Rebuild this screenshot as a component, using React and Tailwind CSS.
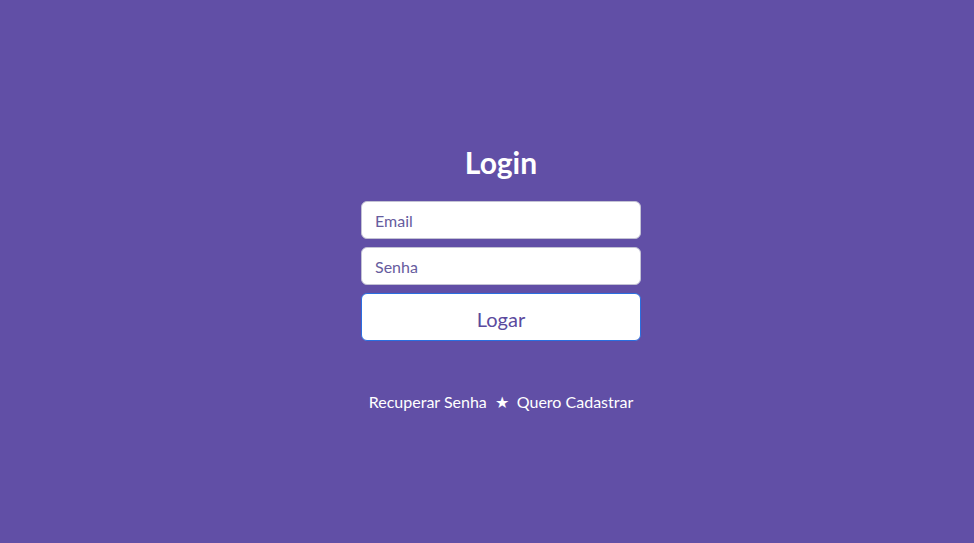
import React from "react";

export default function App() {
  return (
    <div className="w-full h-[543px] bg-[#614fa6] flex flex-col items-center pt-[143px] pl-[28px] font-['Lato',sans-serif]">
      <h1 className="text-[30px] leading-[38px] font-bold text-white">Login</h1>
      <form className="w-[280px] mt-[20px] flex flex-col gap-2" onSubmit={(e) => e.preventDefault()}>
        <input
          type="email"
          placeholder="Email"
          className="h-[38px] w-full bg-white rounded-md border border-[#c3c2d4] px-[13px] text-[16px] text-[#4b3f8c] placeholder:text-[#665c9e] outline-none"
        />
        <input
          type="password"
          placeholder="Senha"
          className="h-[38px] w-full bg-white rounded-md border border-[#c3c2d4] px-[13px] text-[16px] text-[#4b3f8c] placeholder:text-[#665c9e] outline-none"
        />
        <button
          type="submit"
          className="h-[48px] w-full bg-white rounded-md border border-[#2a6fe0] pt-[3px] text-[20px] text-[#5b4a9e]"
        >
          Logar
        </button>
      </form>
      <div className="mt-[49px] flex items-center gap-2 text-[16px] text-white">
        <a href="#">Recuperar Senha</a>
        <span>★</span>
        <a href="#">Quero Cadastrar</a>
      </div>
    </div>
  );
}
